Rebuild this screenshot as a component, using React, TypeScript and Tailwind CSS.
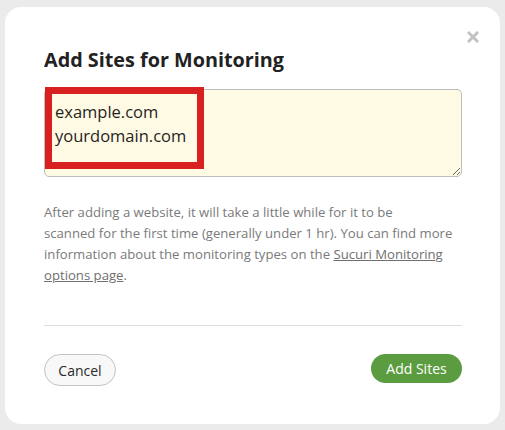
import React from "react";

export default function App() {
  return (
    <div
      className="w-[505px] h-[430px] bg-[#ebebeb] pt-[7px] pl-[5px] overflow-hidden"
      style={{ fontFamily: '"Open Sans", "Liberation Sans", sans-serif' }}
    >
      <div className="relative w-[495px] h-[417px] bg-white rounded-[16px] pt-[39px] pl-[39px] pr-[38px]">
        <button className="absolute left-[462px] top-[24px] w-[12px] h-[12px] flex items-center justify-center">
          <svg width="12" height="12" viewBox="0 0 12 12">
            <path d="M2 2 L10 10 M10 2 L2 10" stroke="#c2c2c2" strokeWidth="3" strokeLinecap="square" />
          </svg>
        </button>
        <h2 className="text-[19.8px] leading-[28px] font-bold text-[#222]">Add Sites for Monitoring</h2>
        <div className="relative mt-[15px]">
          <textarea
            className="block w-[418px] h-[88px] bg-[#fffae4] border border-[#bdbdbd] rounded-[5px] pt-[10px] pl-[10px] text-[16.5px] leading-[24px] text-[#1f1f1f] outline-none resize"
            defaultValue={"example.com\nyourdomain.com"}
          />
          <div className="absolute left-[1px] top-[-2px] w-[159px] h-[82px] border-[7px] border-[#d7201f] pointer-events-none" />
        </div>
        <p className="mt-[25px] w-[418px] text-[13.15px] leading-[21px] text-[#7a7a7a]">
          After adding a website, it will take a little while for it to be
          <br />
          scanned for the first time (generally under 1 hr). You can find more information about the monitoring types on the{" "}
          <a className="underline text-[#6f6f6f]">Sucuri Monitoring options page</a>.
        </p>
        <div className="mt-[39px] h-px bg-[#dddddd]" />
        <div className="mt-[28px] flex justify-between items-start">
          <button className="w-[72px] h-[32px] rounded-full border border-[#c4c4c4] bg-[#f8f8f8] text-[14px] text-[#2a2a2a]">
            Cancel
          </button>
          <button className="w-[91px] h-[29px] rounded-full bg-[#5c9c41] text-[14px] text-white">
            Add Sites
          </button>
        </div>
      </div>
    </div>
  );
}
